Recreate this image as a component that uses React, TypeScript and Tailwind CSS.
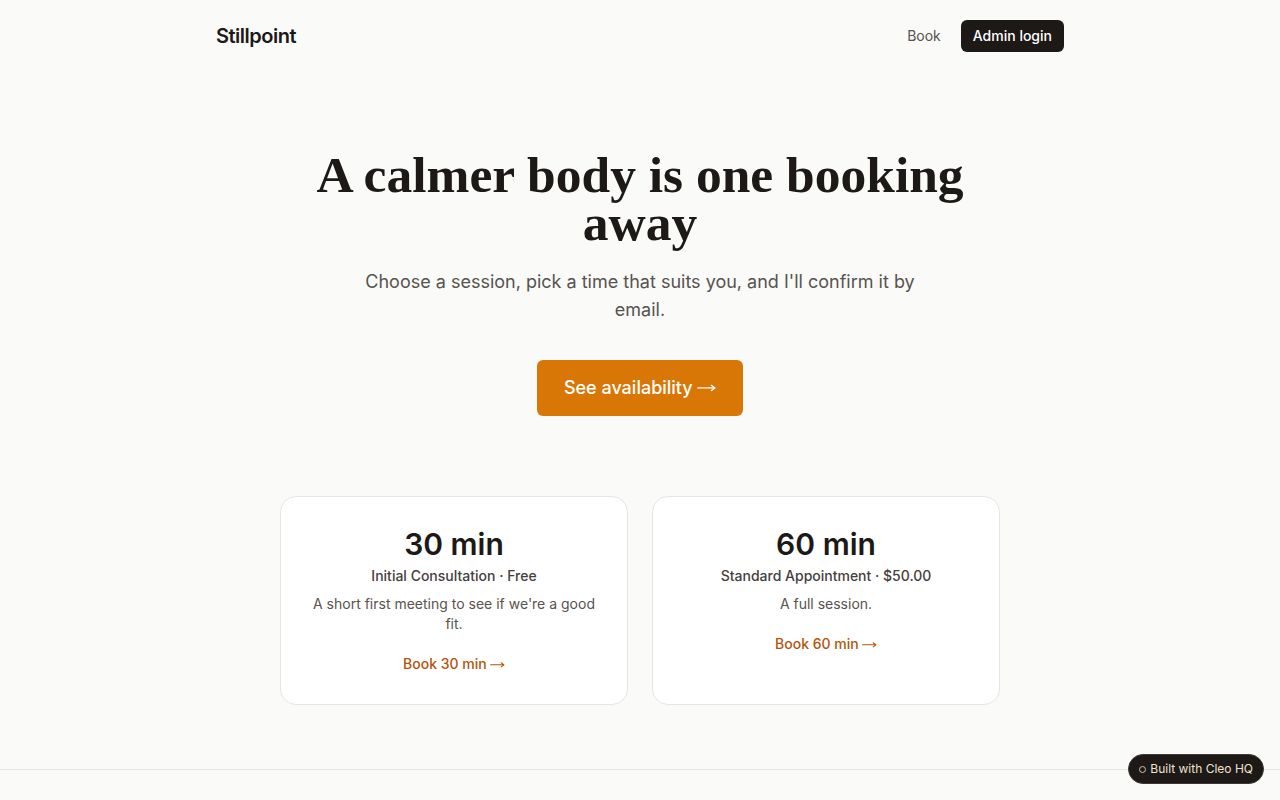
import React from "react";

const sans = { fontFamily: "Inter, 'Liberation Sans', sans-serif" };

function Arrow() {
  return (
    <svg
      viewBox="0 0 20 10"
      className="inline-block w-[1.05em] h-[0.55em] ml-[0.25em] align-middle"
      fill="none"
      stroke="currentColor"
      strokeWidth={1.4}
      strokeLinecap="round"
      strokeLinejoin="round"
    >
      <path d="M0.8 5 H19 M15.2 2.2 L19 5 L15.2 7.8" />
    </svg>
  );
}

function Card({ dur, title, desc }: { dur: string; title: string; desc: string }) {
  return (
    <div className="bg-white border border-[#e7e5e4] rounded-2xl px-7 pt-[29px] pb-[29px] text-center">
      <div className="text-3xl font-semibold text-[#1c1917] leading-9">{dur}</div>
      <div className="mt-1 text-sm font-medium text-[#44403c] leading-5">{title}</div>
      <p className="mt-2 text-sm text-[#57534e] leading-5">{desc}</p>
      <a className="mt-5 inline-block text-sm font-medium text-[#b45309] leading-5">
        Book {dur}
        <Arrow />
      </a>
    </div>
  );
}

export default function App() {
  return (
    <div className="min-h-screen bg-[#fafaf9] text-[#1c1917]" style={sans}>
      <header className="max-w-4xl mx-auto px-6 py-5 flex items-center justify-between">
        <div className="text-xl font-semibold tracking-tight text-[#1c1917]">Stillpoint</div>
        <nav className="flex items-center gap-5">
          <a className="text-sm text-[#57534e]">Book</a>
          <a className="text-sm font-medium text-white bg-[#1c1917] rounded-md px-3 h-8 flex items-center">Admin login</a>
        </nav>
      </header>
      <main>
        <section className="max-w-4xl mx-auto px-6 pt-[79px] text-center">
          <h1
            className="text-[51.5px] leading-[48px] font-bold text-[#1c1917] max-w-[700px] mx-auto"
            style={{ fontFamily: "'Liberation Serif', 'DejaVu Serif', serif" }}
          >
            A calmer body is one booking away
          </h1>
          <p className="mt-[21px] text-lg leading-7 text-[#57534e] max-w-xl mx-auto">
            Choose a session, pick a time that suits you, and I'll confirm it by email.
          </p>
          <a className="mt-9 inline-flex items-center justify-center h-14 px-[27px] rounded-md bg-[#d97706] text-white text-lg font-medium">
            <span>See availability</span>
            <Arrow />
          </a>
        </section>
        <section className="max-w-3xl mx-auto px-6 mt-20 pb-16 grid grid-cols-2 gap-6">
          <Card dur="30 min" title="Initial Consultation · Free" desc="A short first meeting to see if we're a good fit." />
          <Card dur="60 min" title="Standard Appointment · $50.00" desc="A full session." />
        </section>
        <div className="border-t border-[#e7e5e4] h-8" />
      </main>
      <div className="fixed bottom-4 right-4 flex items-center gap-1 rounded-full bg-[#1c1917] border border-[#3f3a36] px-2.5 h-[30px] text-xs text-[#efe3cf]">
        <span className="inline-block w-[7px] h-[7px] rounded-full border border-[#cfc3b0]" />
        Built with Cleo HQ
      </div>
    </div>
  );
}
